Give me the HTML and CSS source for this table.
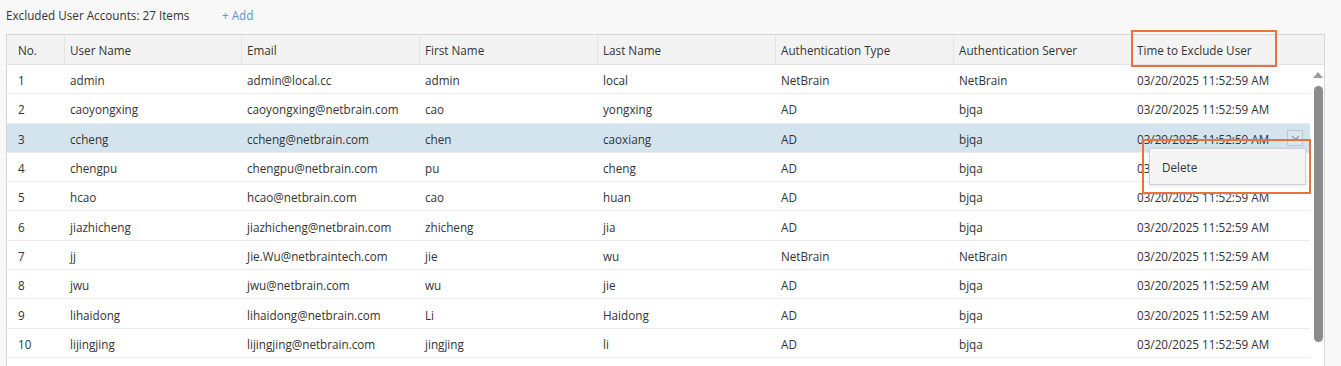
FILE: index.html
```html
<!DOCTYPE html>
<html>
<head>
<meta charset="utf-8">
<link rel="stylesheet" href="styles.css">
</head>
<body>
<div class="toolbar">
  <span class="title">Excluded User Accounts: 27 Items</span>
  <span class="add">+ Add</span>
</div>
<div class="grid">
  <div class="head">
    <div class="hc c1">No.</div>
    <div class="hc c2">User Name</div>
    <div class="hc c3">Email</div>
    <div class="hc c3">First Name</div>
    <div class="hc c3">Last Name</div>
    <div class="hc c3">Authentication Type</div>
    <div class="hc c3">Authentication Server</div>
    <div class="hc clast">Time to Exclude User</div>
  </div>
  <div class="body">
    <div class="rows">
      <div class="row"><div class="c c1">1</div><div class="c c2">admin</div><div class="c c3">admin@local.cc</div><div class="c c3">admin</div><div class="c c3">local</div><div class="c c3">NetBrain</div><div class="c c3">NetBrain</div><div class="c c3">03/20/2025 11:52:59 AM</div></div>
      <div class="row"><div class="c c1">2</div><div class="c c2">caoyongxing</div><div class="c c3">caoyongxing@netbrain.com</div><div class="c c3">cao</div><div class="c c3">yongxing</div><div class="c c3">AD</div><div class="c c3">bjqa</div><div class="c c3">03/20/2025 11:52:59 AM</div></div>
      <div class="row sel"><div class="c c1">3</div><div class="c c2">ccheng</div><div class="c c3">ccheng@netbrain.com</div><div class="c c3">chen</div><div class="c c3">caoxiang</div><div class="c c3">AD</div><div class="c c3">bjqa</div><div class="c c3 ctime"><span>03/20/2025 11:52:59 AM</span><span class="dd"><svg width="9" height="6" viewBox="0 0 9 6"><path d="M1 1 L4.5 4.5 L8 1" fill="none" stroke="#8a9aae" stroke-width="1.2"/></svg></span></div></div>
      <div class="row"><div class="c c1">4</div><div class="c c2">chengpu</div><div class="c c3">chengpu@netbrain.com</div><div class="c c3">pu</div><div class="c c3">cheng</div><div class="c c3">AD</div><div class="c c3">bjqa</div><div class="c c3">03/20/2025 11:52:59 AM</div></div>
      <div class="row"><div class="c c1">5</div><div class="c c2">hcao</div><div class="c c3">hcao@netbrain.com</div><div class="c c3">cao</div><div class="c c3">huan</div><div class="c c3">AD</div><div class="c c3">bjqa</div><div class="c c3">03/20/2025 11:52:59 AM</div></div>
      <div class="row"><div class="c c1">6</div><div class="c c2">jiazhicheng</div><div class="c c3">jiazhicheng@netbrain.com</div><div class="c c3">zhicheng</div><div class="c c3">jia</div><div class="c c3">AD</div><div class="c c3">bjqa</div><div class="c c3">03/20/2025 11:52:59 AM</div></div>
      <div class="row"><div class="c c1">7</div><div class="c c2">jj</div><div class="c c3">Jie.Wu@netbraintech.com</div><div class="c c3">jie</div><div class="c c3">wu</div><div class="c c3">NetBrain</div><div class="c c3">NetBrain</div><div class="c c3">03/20/2025 11:52:59 AM</div></div>
      <div class="row"><div class="c c1">8</div><div class="c c2">jwu</div><div class="c c3">jwu@netbrain.com</div><div class="c c3">wu</div><div class="c c3">jie</div><div class="c c3">AD</div><div class="c c3">bjqa</div><div class="c c3">03/20/2025 11:52:59 AM</div></div>
      <div class="row"><div class="c c1">9</div><div class="c c2">lihaidong</div><div class="c c3">lihaidong@netbrain.com</div><div class="c c3">Li</div><div class="c c3">Haidong</div><div class="c c3">AD</div><div class="c c3">bjqa</div><div class="c c3">03/20/2025 11:52:59 AM</div></div>
      <div class="row"><div class="c c1">10</div><div class="c c2">lijingjing</div><div class="c c3">lijingjing@netbrain.com</div><div class="c c3">jingjing</div><div class="c c3">li</div><div class="c c3">AD</div><div class="c c3">bjqa</div><div class="c c3">03/20/2025 11:52:59 AM</div></div>
    </div>
    <div class="scroll">
      <div class="arrow"></div>
      <div class="thumb"></div>
    </div>
  </div>
  <div class="mark mark-head"></div>
  <div class="menu"><div class="mi">Delete</div></div>
  <div class="mark mark-menu"></div>
</div>
</body>
</html>
```
FILE: styles.css
```css
* { box-sizing: border-box; }
html, body { margin: 0; padding: 0; }
body {
  background: #f8f8f8;
  font-family: "Open Sans", "Noto Sans", sans-serif;
  font-size: 11.7px;
  color: #333;
  width: 1341px;
  height: 366px;
  overflow: hidden;
}
.toolbar {
  height: 34px;
  padding: 0 0 4px 6px;
  display: flex;
  align-items: center;
}
.title { width: 216px; }
.add { color: #5a94cf; }
.grid {
  position: relative;
  margin-left: 6px;
  width: 1319px;
  border: 1px solid #d6d6d6;
  border-bottom: none;
  background: #fff;
  height: 340px;
}
.head {
  display: flex;
  height: 30px;
  background: #f3f3f3;
  border-bottom: 1px solid #e2e2e2;
}
.hc {
  display: flex;
  align-items: center;
  border-right: 1px solid #e4e4e4;
  padding-left: 5px;
  padding-top: 1px;
  white-space: nowrap;
}
.c1 { width: 58px; padding-left: 11px; }
.c2 { width: 177px; }
.c3 { width: 178px; }
.clast { width: 192px; border-right: none; }
.body { display: flex; }
.rows { width: 1303px; }
.row {
  display: flex;
  height: 29.3px;
  border-bottom: 1px solid #ececec;
}
.row.sel { background: #d4e4ee; }
.c {
  display: flex;
  align-items: center;
  padding-left: 5px;
  padding-top: 2px;
  white-space: nowrap;
}
.c.c1 { padding-left: 11px; }
.ctime { justify-content: space-between; padding-right: 7px; }
.dd {
  width: 16px;
  height: 16px;
  border: 1px solid #b8c8da;
  background: #dbe6ef;
  display: flex;
  align-items: center;
  justify-content: center;
  margin-top: -1px;
}
.scroll {
  width: 14px;
  display: flex;
  flex-direction: column;
  align-items: center;
  padding-top: 7px;
}
.arrow {
  width: 0; height: 0;
  border-left: 5px solid transparent;
  border-right: 5px solid transparent;
  border-bottom: 6px solid #9a9a9a;
  margin-left: 2px;
}
.thumb {
  margin-top: 8px;
  width: 9px;
  height: 256px;
  border-radius: 5px;
  background: #8c8c8c;
  margin-left: 3px;
}
.mark {
  position: absolute;
  border: 2px solid #e8743b;
}
.mark-head { left: 1124px; top: -5px; width: 146px; height: 37px; }
.mark-menu { left: 1135px; top: 104px; width: 169px; height: 55px; }
.menu {
  position: absolute;
  left: 1142px;
  top: 113px;
  width: 157px;
  height: 37px;
  background: #f5f5f5;
  border: 1px solid #d2d2d2;
  box-shadow: 0 1px 3px rgba(0,0,0,0.12);
  display: flex;
  align-items: center;
  padding-left: 12px;
}
```
